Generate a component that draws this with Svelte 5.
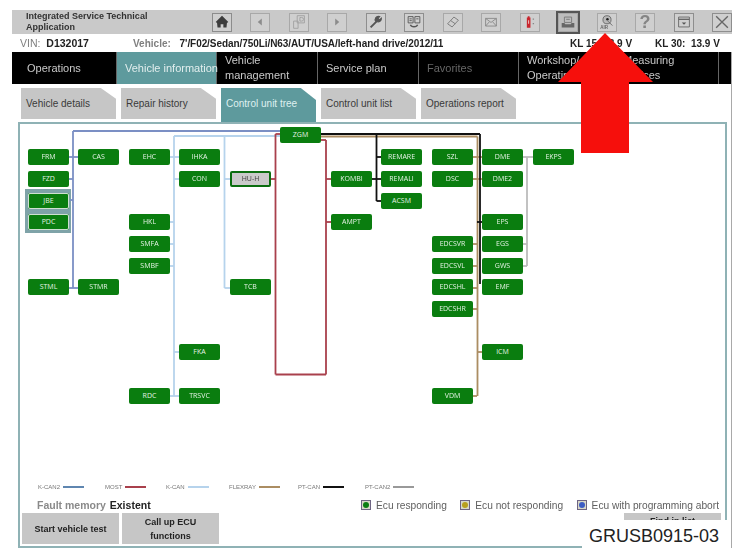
<script>
	// page coordinates of the diagram, canvas starts at 20,124
	const cols = { a: 28, b: 78, c: 129, d: 179, e: 230, f: 280, g: 331, h: 381, i: 432, j: 482, k: 533 };
	const nodes = [
		['ZGM', 'f', 127],
		['FRM', 'a', 149], ['CAS', 'b', 149], ['EHC', 'c', 149], ['IHKA', 'd', 149], ['REMARE', 'h', 149], ['SZL', 'i', 149], ['DME', 'j', 149], ['EKPS', 'k', 149],
		['FZD', 'a', 171], ['CON', 'd', 171], ['HU-H', 'e', 171], ['KOMBI', 'g', 171], ['REMALI', 'h', 171], ['DSC', 'i', 171], ['DME2', 'j', 171],
		['JBE', 'a', 193], ['ACSM', 'h', 193],
		['PDC', 'a', 214], ['HKL', 'c', 214], ['AMPT', 'g', 214], ['EPS', 'j', 214],
		['SMFA', 'c', 236], ['EDCSVR', 'i', 236], ['EGS', 'j', 236],
		['SMBF', 'c', 258], ['EDCSVL', 'i', 258], ['GWS', 'j', 258],
		['STML', 'a', 279], ['STMR', 'b', 279], ['TCB', 'e', 279], ['EDCSHL', 'i', 279], ['EMF', 'j', 279],
		['EDCSHR', 'i', 301],
		['FKA', 'd', 344], ['ICM', 'j', 344],
		['RDC', 'c', 388], ['TRSVC', 'd', 388], ['VDM', 'i', 388]
	];

	const blue = '#7b8fc4', sky = '#b6d3ec', red = '#a9404c', brown = '#ab8d62', black = '#111', grey = '#bcbcbc';
	const wires = [
		// K-CAN2
		[blue, 73, 131, 280, 131], [blue, 73, 131, 73, 288], [blue, 68, 157, 78, 157], [blue, 68, 179, 73, 179], [blue, 70, 200, 73, 200], [blue, 68, 288, 78, 288],
		// K-CAN
		[sky, 174, 136, 280, 136], [sky, 174, 136, 174, 396], [sky, 224.5, 136, 224.5, 288], [sky, 224.5, 288, 230, 288], [sky, 224.5, 179, 230, 179],
		[sky, 169, 157, 179, 157], [sky, 174, 179, 179, 179], [sky, 169, 222, 174, 222], [sky, 169, 244, 174, 244], [sky, 169, 266, 174, 266], [sky, 174, 352, 179, 352], [sky, 169, 396, 179, 396],
		// MOST
		[red, 275.5, 134, 275.5, 374.5], [red, 326, 140, 326, 374.5], [red, 275.5, 374.5, 326, 374.5], [red, 275.5, 134, 280, 134], [red, 321, 140, 326, 140],
		[red, 270, 179, 275.5, 179], [red, 326, 179, 331, 179], [red, 326, 222, 331, 222],
		// FLEXRAY
		[brown, 321, 136.5, 477.5, 136.5], [brown, 477.5, 136.5, 477.5, 396], [brown, 472, 157, 482, 157], [brown, 472, 179, 482, 179], [brown, 472, 244, 477, 244], [brown, 472, 266, 477, 266],
		[brown, 472, 288, 477, 288], [brown, 472, 309, 477, 309], [brown, 477, 352, 482, 352], [brown, 472, 396, 477, 396],
		// PT-CAN
		[black, 321, 134, 480, 134], [black, 480, 134, 480, 284], [black, 376.5, 134, 376.5, 201], [black, 376.5, 157, 381, 157], [black, 371, 179, 381, 179], [black, 376.5, 201, 381, 201], [black, 477, 222, 482, 222],
		// PT-CAN2
		[grey, 527, 157, 527, 266], [grey, 522, 157, 533, 157], [grey, 522, 244, 527, 244], [grey, 522, 266, 527, 266]
	];

	const legend = [
		['K-CAN2', '#5f86b0'], ['MOST', red], ['K-CAN', sky], ['FLEXRAY', brown], ['PT-CAN', black], ['PT-CAN2', '#999']
	];
	const navItems = [
		['Operations', 105], ['Vehicle information', 100], ['Vehicle management', 101], ['Service plan', 101], ['Favorites', 100]
	];
	const tabs = ['Vehicle details', 'Repair history', 'Control unit tree', 'Control unit list', 'Operations report'];
</script>

<div class="shot">
	<header class="titlebar">
		<div class="title">Integrated Service Technical<br />Application</div>
		<div class="tools">
			<span class="tool strong"><svg viewBox="0 0 20 20"><path d="M10 3 3 10l1.5 1L5 16h3.5v-3.5h3V16H15l.5-5 1.5-1Z" fill="#3d3d3d" /></svg></span>
			<span class="tool"><svg viewBox="0 0 20 20"><path d="M12 6 7.5 10l4.5 4Z" fill="#8c8c8c" /></svg></span>
			<span class="tool"><svg viewBox="0 0 20 20" fill="none" stroke="#a0a0a0"><path d="M8 3h8v8H8ZM4 9h5v8H4Z" /><path d="M11 5v4h2a2 2 0 0 0 0-4Z" /></svg></span>
			<span class="tool"><svg viewBox="0 0 20 20"><path d="M8 6l4.5 4L8 14Z" fill="#8c8c8c" /></svg></span>
			<span class="tool dark"><svg viewBox="0 0 20 20" fill="none" stroke="#555" stroke-width="2.2"><path d="M4 16 11 9" /><path d="M10 9.5a3.5 3.5 0 0 1 4-5.5l-1.800 2 1.700 1.700 2-1.800a3.500 3.500 0 0 1-5 3.500" stroke-width="1.400" fill="#555" /></svg></span>
			<span class="tool dark"><svg viewBox="0 0 20 20" fill="none" stroke="#555"><path d="M3.500 4h5.500v7H3.500ZM11 4h5.500v7H11Z" /><path d="M5 6.500h2.500M5 8.500h2.500M12.500 6.500H15" /><path d="M6 13c1 3 7 3 8 0" stroke-width="1.500" /></svg></span>
			<span class="tool"><svg viewBox="0 0 20 20" fill="none" stroke="#777"><path d="M4 12 11 4.500l5 3.500-7 7.500Z" /><path d="M7.500 8.500l5 3.500" /></svg></span>
			<span class="tool"><svg viewBox="0 0 20 20" fill="none" stroke="#888"><path d="M4 6h12v8.500H4Z" /><path d="M4 6l6 4.500L16 6M4 14.500 8 10M16 14.500 12 10" /></svg></span>
			<span class="tool"><svg viewBox="0 0 20 20"><path d="M6.500 5h1V3.500h2V5h1v11.500h-4Z" fill="#c8242c" /><path d="M8 8h1v4H8Z" fill="#f3d6d6" /><path d="M13 6h1.500v1.500H13ZM13 11h1.500v1.500H13Z" fill="#888" /></svg></span>
			<span class="tool active"><svg viewBox="0 0 20 20"><path d="M6 4.500h8v6H6Z" fill="none" stroke="#777" /><path d="M3 11h3l1 1.500h6l1-1.500h3v5H3Z" fill="#666" /><path d="M8 7h4" stroke="#777" /></svg></span>
			<span class="tool"><svg viewBox="0 0 20 20"><circle cx="10" cy="7.500" r="4.500" fill="#b8b8b8" stroke="#666" /><circle cx="10.500" cy="7" r="1.400" fill="#222" /><path d="M11 9l5 5" stroke="#666" /><text x="2.500" y="17.500" class="air">AIR</text></svg></span>
			<span class="tool glyph">?</span>
			<span class="tool dark"><svg viewBox="0 0 20 20" fill="none" stroke="#666"><path d="M4 4.500h12v11H4Z" /><path d="M4 7h12" stroke-width="1.500" /><path d="M7.500 10.500h5L10 13Z" fill="#555" stroke="none" /></svg></span>
			<span class="tool dark"><svg viewBox="0 0 20 20" fill="none" stroke="#666" stroke-width="1.500"><path d="M3.500 3.500l13 13M16.500 3.500l-13 13" /></svg></span>
		</div>
	</header>

	<div class="vehicle-row">
		<span class="vin"><span class="dim">VIN:</span> <b>D132017</b></span>
		<span class="veh"><b class="dim">Vehicle:</b> <b class="veh-value">7'/F02/Sedan/750Li/N63/AUT/USA/left-hand drive/2012/11</b></span>
		<b class="kl">KL 15: 13.9 V</b>
		<b class="kl30">KL 30: &nbsp;13.9 V</b>
	</div>

	<div class="body">
		<nav class="nav">
			{#each navItems as [label, width], i}
				<div class="nav-item" class:selected={i === 1} class:off={i === 4} class:short={i === 2 || i === 3} style:width="{width}px">{label}</div>
			{/each}
			<div class="nav-item short wide">Workshop/<br />Operating fluids</div>
			<div class="nav-item short last">Measuring<br />devices</div>
		</nav>

		<div class="tabs">
			{#each tabs as tab, i}
				<div class="tab" class:current={i === 2}>{tab}</div>
			{/each}
		</div>

		<section class="panel">
			<div class="canvas">
				<div class="group"></div>
				<svg class="wires" viewBox="20 124 705 357" width="705" height="357">
					{#each wires as [color, x1, y1, x2, y2]}
						<line {x1} {y1} {x2} {y2} stroke={color} stroke-width="1.8" />
					{/each}
				</svg>
				{#each nodes as [name, col, top]}
					<div
						class="node"
						class:picked={name === 'HU-H'}
						class:grouped={name === 'JBE' || name === 'PDC'}
						style:left="{cols[col] - 20}px"
						style:top="{top - 124}px"
					>
						{name}
					</div>
				{/each}
			</div>

			<div class="legend">
				{#each legend as [label, color]}
					<div class="legend-item">
						<span>{label}</span>
						<i style:background={color}></i>
					</div>
				{/each}
			</div>

			<div class="fault-row">
				<div class="fault"><span class="dim">Fault memory</span> <b>Existent</b></div>
				<div class="states">
					<span class="state"><i class="box"><i style:background="#0b7d12"></i></i>Ecu responding</span>
					<span class="state"><i class="box"><i style:background="#b79f1e"></i></i>Ecu not responding</span>
					<span class="state"><i class="box"><i style:background="#3c5cc4"></i></i>Ecu with programming abort</span>
				</div>
			</div>

			<div class="actions">
				<button>Start vehicle test</button>
				<button>Call up ECU<br />functions</button>
				<button class="find">Find in list</button>
			</div>
		</section>
	</div>
</div>

<svg class="arrow" viewBox="0 0 100 125" width="100" height="125">
	<path d="M48 0 96 49H72V120H24V49H1Z" fill="#f60f0c" />
</svg>
<div class="stamp">GRUSB0915-03</div>

<style>
	:global(body) {
		background: #fff;
	}
	.shot {
		box-sizing: border-box;
		width: 741px;
		height: 559px;
		padding: 10px 9px 0 12px;
		font-family: 'Liberation Sans', Arial, sans-serif;
		color: #222;
		overflow: hidden;
		filter: blur(0.5px);
	}
	.titlebar {
		display: flex;
		align-items: center;
		height: 24px;
		background: #c9c9c9;
	}
	.title {
		width: 198px;
		padding-left: 14px;
		font-size: 9px;
		line-height: 11px;
		font-weight: bold;
		color: #333;
	}
	.tools {
		display: flex;
		align-items: center;
		gap: 18.5px;
	}
	.tool {
		display: flex;
		align-items: center;
		justify-content: center;
		box-sizing: border-box;
		width: 20px;
		height: 19px;
		border: 1px solid #a8a8a8;
		background: #cfcfcf;
	}
	.tool svg {
		width: 18px;
		height: 18px;
	}
	.strong {
		border-color: #8c8c8c;
	}
	.dark {
		border-color: #8e8e8e;
	}
	.active {
		outline: 2px solid #555;
		background: #bdbdbd;
	}
	.glyph {
		font-size: 18px;
		font-weight: bold;
		color: #858585;
		line-height: 1;
	}
	.air {
		font-size: 5px;
		font-weight: bold;
		fill: #666;
	}
	.vehicle-row {
		display: flex;
		align-items: center;
		height: 18px;
		font-size: 10px;
	}
	.dim {
		color: #7f7f7f;
	}
	.vin {
		width: 121px;
		padding-left: 8px;
		box-sizing: border-box;
		font-size: 10.5px;
	}
	.vin b {
		margin-left: 3px;
	}
	.veh {
		width: 437px;
		white-space: nowrap;
	}
	.veh-value {
		margin-left: 6px;
		letter-spacing: -0.07px;
	}
	.kl {
		width: 85px;
	}
	.body {
		border-right: 1px solid #a9a9a9;
	}
	.nav {
		display: flex;
		height: 32px;
		background: #000;
	}
	.nav-item {
		box-sizing: border-box;
		display: flex;
		align-items: center;
		padding-left: 15px;
		border-right: 1px solid #666;
		font-size: 11px;
		line-height: 15px;
		color: #c9c9c9;
	}
	.nav-item.selected {
		background: #5e9a9d;
		padding-left: 8px;
		color: #e2eeee;
		white-space: nowrap;
	}
	.nav-item.short {
		padding-left: 8px;
	}
	.nav-item.off {
		color: #666;
		padding-left: 8px;
	}
	.nav-item.wide {
		width: 100px;
		border-right: 0;
	}
	.nav-item.last {
		width: 100px;
		padding-left: 4px;
	}
	.tabs {
		display: flex;
		gap: 5px;
		height: 38px;
		padding: 4px 0 0 9px;
		box-sizing: border-box;
	}
	.tab {
		display: flex;
		align-items: center;
		box-sizing: border-box;
		width: 95px;
		height: 31px;
		padding: 0 0 0 5px;
		background: #c6c6c6;
		font-size: 10px;
		color: #3a3a3a;
		clip-path: polygon(0 0, 84% 0, 100% 35%, 100% 100%, 0 100%);
	}
	.tab.current {
		height: 34px;
		padding-bottom: 3px;
		background: #5e9a9d;
		color: #dff0f0;
	}
	.panel {
		display: flex;
		flex-direction: column;
		box-sizing: border-box;
		width: 709px;
		height: 426px;
		margin-left: 6px;
		border: 2px solid #8fb2b5;
	}
	.canvas {
		position: relative;
		height: 357px;
	}
	.wires {
		position: absolute;
		left: 0;
		top: 0;
	}
	.group {
		position: absolute;
		left: 5px;
		top: 65px;
		width: 46px;
		height: 44px;
		background: #7fa3a8;
	}
	.node {
		position: absolute;
		width: 41px;
		height: 16px;
		border-radius: 2px;
		background: #0a7d0f;
		color: #e6f3e6;
		font-family: 'Open Sans', 'Liberation Sans', sans-serif;
		font-size: 7px;
		line-height: 16px;
		text-align: center;
	}
	.node.picked {
		box-sizing: border-box;
		border: 2px solid #0a6d0f;
		background: #cacaca;
		color: #3b3b3b;
		line-height: 12px;
	}
	.node.grouped {
		outline: 1px solid #cfe0d0;
		outline-offset: -1px;
	}
	.legend {
		display: grid;
		grid-template-columns: 67px 61px 63px 69px 67px auto;
		align-items: center;
		height: 12px;
		padding-left: 18px;
	}
	.legend-item {
		display: flex;
		align-items: center;
		gap: 3px;
		font-size: 6px;
		color: #777;
	}
	.legend-item i {
		width: 21px;
		height: 2px;
	}
	.fault-row {
		display: flex;
		align-items: center;
		justify-content: space-between;
		height: 14px;
		margin-top: 5px;
		padding: 0 6px 0 17px;
	}
	.fault {
		font-size: 10.5px;
	}
	.fault .dim {
		font-weight: bold;
		color: #8a8a8a;
		margin-right: 1px;
	}
	.states {
		display: flex;
		gap: 13.5px;
	}
	.state {
		display: flex;
		align-items: center;
		gap: 5px;
		font-size: 10.2px;
		color: #5f5f5f;
	}
	.box {
		display: flex;
		align-items: center;
		justify-content: center;
		box-sizing: border-box;
		width: 10px;
		height: 10px;
		border: 1px solid #6e6483;
		background: #d8d8c8;
	}
	.box i {
		width: 6px;
		height: 6px;
		border-radius: 50%;
	}
	.actions {
		display: flex;
		gap: 3px;
		height: 31px;
		margin: 1px 0 0 2px;
	}
	button {
		width: 97px;
		border: 0;
		padding: 0;
		background: #c6c6c6;
		font-family: inherit;
		font-size: 9px;
		font-weight: bold;
		line-height: 14px;
		color: #222;
	}
	.find {
		margin-left: 402px;
		padding-bottom: 16px;
	}
	.arrow {
		position: absolute;
		left: 557px;
		top: 33px;
	}
	.stamp {
		position: absolute;
		left: 582px;
		top: 520px;
		box-sizing: border-box;
		width: 149px;
		height: 39px;
		padding: 6px 0 0 7px;
		background: #fff;
		font-family: 'Liberation Sans', Arial, sans-serif;
		font-size: 18px;
		line-height: 20px;
		color: #222;
	}
</style>
